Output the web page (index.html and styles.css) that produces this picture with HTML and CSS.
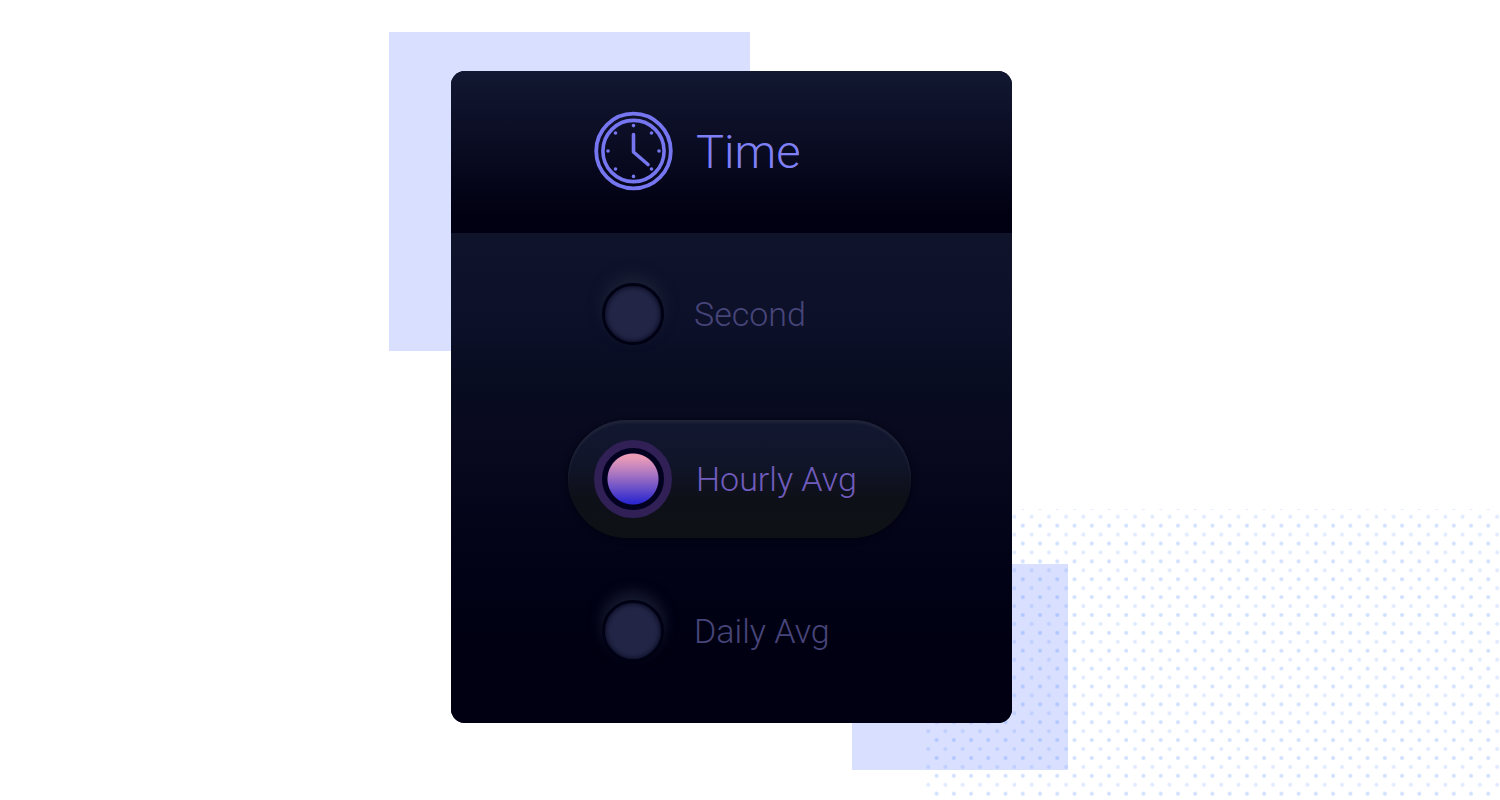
FILE: index.html
```html
<!DOCTYPE html>
<html lang="en">
<head>
<meta charset="utf-8">
<title>Time</title>
<link rel="stylesheet" href="styles.css">
</head>
<body>
<main class="scene">
  <div class="block block-top"></div>
  <div class="block block-bottom"></div>
  <svg class="dots" aria-hidden="true">
    <defs>
      <pattern id="dot-grid" y="-5.2" width="17.24" height="17.87" patternUnits="userSpaceOnUse">
        <circle cx="10.6" cy="4" r="2" fill="#3c7cff" fill-opacity=".24"/>
        <circle cx="2.2" cy="13" r="2" fill="#3c7cff" fill-opacity=".16"/>
      </pattern>
    </defs>
    <rect width="100%" height="100%" fill="url(#dot-grid)"/>
  </svg>
  <form class="card">
    <header class="card-header">
      <svg class="clock" viewBox="0 0 78 78" fill="none" stroke="#7676f0" stroke-linecap="round" stroke-linejoin="round" aria-hidden="true">
        <circle cx="39.5" cy="39" r="37.3" stroke-width="3.8"/>
        <circle cx="39.5" cy="39" r="30.6" stroke-width="3.6"/>
        <path d="M39.5 22.5V40L54 52.5" stroke-width="3.6"/>
        <g fill="#7676f0" stroke="none">
          <circle cx="39.5" cy="13.6" r="1.8"/>
          <circle cx="57.5" cy="21" r="1.8"/>
          <circle cx="65" cy="39" r="1.8"/>
          <circle cx="57.5" cy="57" r="1.8"/>
          <circle cx="39.5" cy="64.4" r="1.8"/>
          <circle cx="21.5" cy="57" r="1.8"/>
          <circle cx="14" cy="39" r="1.8"/>
          <circle cx="21.5" cy="21" r="1.8"/>
        </g>
      </svg>
      <h1 class="title" id="title">Time</h1>
    </header>
    <div class="options" role="radiogroup" aria-labelledby="title">
      <label class="option"><input class="radio" type="radio" name="time" value="second"><span>Second</span></label>
      <label class="option"><input class="radio" type="radio" name="time" value="hourly" checked><span>Hourly Avg</span></label>
      <label class="option"><input class="radio" type="radio" name="time" value="daily"><span>Daily Avg</span></label>
    </div>
  </form>
</main>
</body>
</html>
```
FILE: styles.css
```css
* {
  box-sizing: border-box;
}

body {
  margin: 0;
  padding: 32px 43px 30px 0;
  min-height: 100vh;
  position: relative;
  overflow-x: hidden;
  background: #fff;
  font-family: Roboto, "Liberation Sans", sans-serif;
  font-weight: 300;
}

.scene {
  max-width: 679px;
  margin: 0 auto;
  padding: 39px 56px 47px 62px;
  position: relative;
}

.block {
  position: absolute;
  background: #d8dfff;
}

.block-top {
  top: 0;
  left: 0;
  width: 361px;
  height: 319px;
}

.block-bottom {
  right: 0;
  bottom: 0;
  width: 216px;
  height: 206px;
}

.dots {
  position: absolute;
  left: 537px;
  top: 477px;
  width: 574px;
  height: 291px;
}

.card {
  position: relative;
  border-radius: 14px;
  overflow: hidden;
  background: #000012;
}

.card-header {
  display: flex;
  align-items: center;
  gap: 24px;
  padding: 41px 24px 43px 143px;
  background: linear-gradient(#121831, #090b21 50%, #010012 90%, #010012);
}

.clock {
  width: 78px;
  height: 78px;
  overflow: visible;
}

.title {
  margin: 0;
  padding-top: 2px;
  font-size: 47px;
  line-height: 56px;
  font-weight: 300;
  color: #8080f6;
}

.options {
  display: flex;
  flex-direction: column;
  align-items: flex-start;
  gap: 34px;
  padding: 22px 24px 33px 117px;
  background: linear-gradient(#0f142b, #0c1029 18%, #080c20 32%, #090a1f 40%, #030318 66%, #000012 85%, #000012);
}

.option {
  display: flex;
  align-items: center;
  gap: 22px;
  max-width: 343px;
  width: 100%;
  padding: 20px 26px;
  border-radius: 59px;
  font-size: 34px;
  line-height: 40px;
  color: #474579;
  cursor: pointer;
}

.option:has(:checked) {
  margin-top: 13px;
  gap: 24px;
  color: #705cbc;
  background: linear-gradient(#131832, #10152a 35%, #0e1019 65%, #0e1114);
  box-shadow: inset 0 3px 2px #1f2338, 0 1px 6px #00000e;
}

.radio {
  appearance: none;
  flex: none;
  margin: 8px;
  width: 62px;
  height: 62px;
  border: 3px solid #010114;
  border-radius: 50%;
  background: #222545;
  box-shadow: inset 0 0 4px 1px #0a0b24, 0 -8px 14px #1c2236cc;
}

.radio:checked {
  margin: 0;
  width: 78px;
  height: 78px;
  border: 8px solid #302055;
  background: radial-gradient(circle, transparent 25px, #020220 26px), linear-gradient(#ec9cb8 15%, #b47cc0 38%, #6a50c8 65%, #2c27cf 88%);
  background-origin: padding-box;
  box-shadow: none;
}
```
